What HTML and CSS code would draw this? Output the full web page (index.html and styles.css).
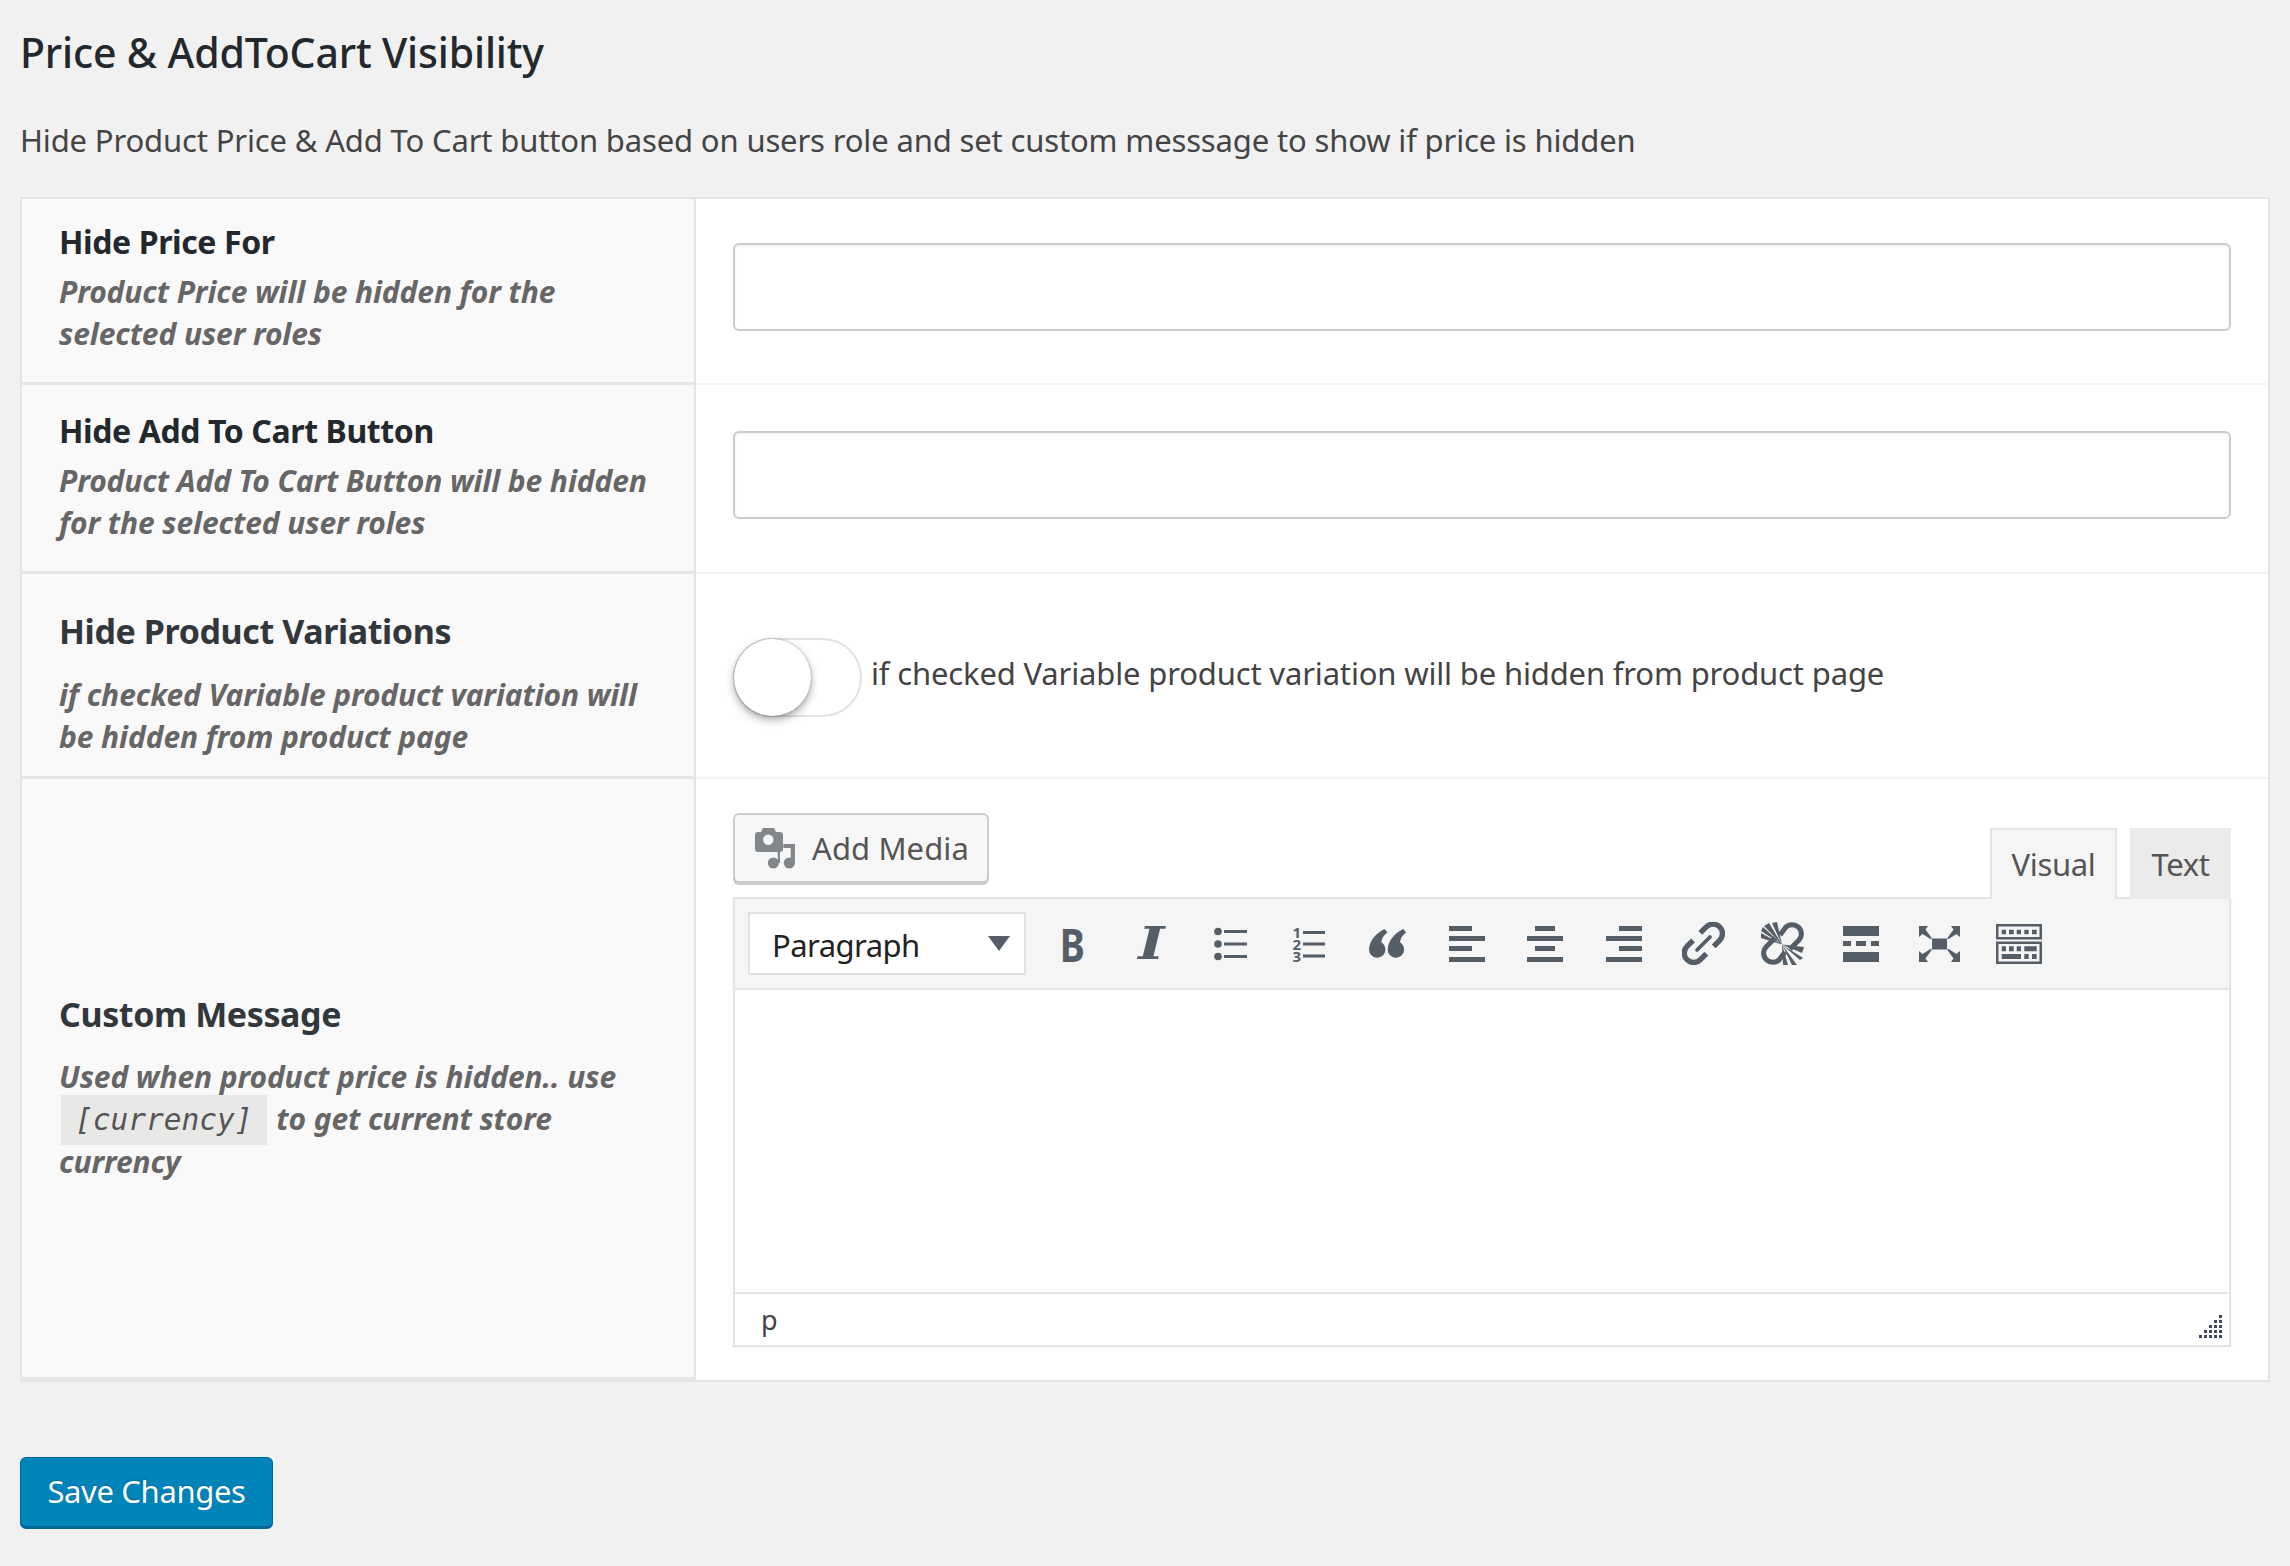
FILE: index.html
```html
<!DOCTYPE html>
<html lang="en">
<head>
<meta charset="utf-8">
<title>Price &amp; AddToCart Visibility</title>
<link rel="stylesheet" href="styles.css">
</head>
<body>
<h2 class="title">Price &amp; AddToCart Visibility</h2>
<p class="intro">Hide Product Price &amp; Add To Cart button based on users role and set custom messsage to show if price is hidden</p>
<div class="form-table">
  <div class="row row-a">
    <div class="label"><h3>Hide Price For</h3><p>Product Price will be hidden for the selected user roles</p></div>
    <div class="value"><div class="select-box"></div></div>
  </div>
  <div class="row row-a2">
    <div class="label"><h3>Hide Add To Cart Button</h3><p>Product Add To Cart Button will be hidden for the selected user roles</p></div>
    <div class="value"><div class="select-box"></div></div>
  </div>
  <div class="row row-b">
    <div class="label"><h3 class="spaced">Hide Product Variations</h3><p>if checked Variable product variation will be hidden from product page</p></div>
    <div class="value toggle-cell"><span class="toggle"><span class="knob"></span></span><span class="toggle-text">if checked Variable product variation will be hidden from product page</span></div>
  </div>
  <div class="row row-c">
    <div class="label center"><h3 class="spaced">Custom Message</h3><p>Used when product price is hidden.. use <code>[currency]</code> to get current store currency</p></div>
    <div class="value editor-cell">
      <div class="editor-tools">
        <button class="media-btn" type="button">
          <svg class="media-icon" viewBox="0 0 42 41"><path fill-rule="evenodd" d="M9 0h9a2 2 0 0 1 2 2l1 2h4a3 3 0 0 1 3 3v14a3 3 0 0 1-3 3H3a3 3 0 0 1-3-3V7a3 3 0 0 1 3-3h3l1-2a2 2 0 0 1 2-2zM13.300 6.500a5.200 5.200 0 1 0 0 10.400a5.200 5.200 0 0 0 0-10.400z"/><circle cx="18.300" cy="35" r="5.500"/><circle cx="34.300" cy="35" r="5.500"/><path d="M22.700 24H25v11h-2.300zM28.300 16H40v19h-4.300V20h-7.400z"/></svg>
          <span>Add Media</span>
        </button>
        <div class="tabs"><span class="tab active">Visual</span><span class="tab">Text</span></div>
      </div>
      <div class="editor">
        <div class="toolbar">
          <div class="format-select"><span>Paragraph</span><i class="caret"></i></div>
          <span class="tool"><b class="glyph-b">B</b></span>
          <span class="tool"><b class="glyph-i">I</b></span>
          <span class="tool"><svg viewBox="0 0 33 34" class="ico list"><circle cx="4" cy="4.500" r="3.800"/><circle cx="4" cy="17" r="3.800"/><circle cx="4" cy="29.500" r="3.800"/><path d="M10 3h23v3H10zM10 15.500h23v3H10zM10 28h23v3H10z"/></svg></span>
          <span class="tool"><span class="ol"><span class="ol-nums"><span>1</span><span>2</span><span>3</span></span><svg viewBox="0 0 23 34" class="ol-lines"><path d="M0 3.500h23v3H0zM0 15.500h23v3H0zM0 28h23v3H0z"/></svg></span></span>
          <span class="tool"><svg viewBox="0 0 38 30" class="ico quote"><path d="M15.500 0L18.500 3.500C14 7 12.500 10 12.500 13.500A8.200 8.200 0 1 1 0 21C0 12 7 4 15.500 0Z"/><path d="M34.200 0L37.200 3.500C32.700 7 31.200 10 31.200 13.500A8.200 8.200 0 1 1 18.700 21C18.700 12 25.700 4 34.200 0Z"/></svg></span>
          <span class="tool"><svg viewBox="0 0 36 36" class="ico"><path d="M0 0h23v5H0zM0 10h36v5H0zM0 20h23v5H0zM0 31h36v5H0z"/></svg></span>
          <span class="tool"><svg viewBox="0 0 36 36" class="ico"><path d="M8 0h20v5H8zM0 10h36v5H0zM8 20h20v5H8zM0 31h36v5H0z"/></svg></span>
          <span class="tool"><svg viewBox="0 0 36 36" class="ico"><path d="M13 0h23v5H13zM0 10h36v5H0zM13 20h23v5H13zM0 31h36v5H0z"/></svg></span>
          <span class="tool"><svg viewBox="0 0 43 43" class="ico link"><g fill="none" stroke="#555d66" stroke-width="5.400" stroke-linecap="butt"><path d="M18.300 10.900L24.300 4.900A9.200 9.200 0 0 1 37.700 18.300L31.700 24.300"/><path d="M24.400 31.700L18.400 37.700A9.200 9.200 0 0 1 5 24.300L11 18.300"/><path d="M15 28L28 15" stroke-width="3.800" stroke-linecap="round"/></g></svg></span>
          <span class="tool"><svg viewBox="0 0 43 43" class="ico link"><g fill="none" stroke="#555d66" stroke-width="5"><path d="M19 13L24.500 5.500A9.200 9.200 0 0 1 38 18L29 27"/><path d="M24 30L18.500 37.500A9.200 9.200 0 0 1 5 25L14 16"/></g><path d="M21 22.500L11 1 16 0ZM21 22.500L3 4 8 1ZM21 22.500L0 9 2 5ZM21 22.500L0 16 0 11ZM21 22.500L43 25 41 31ZM21 22.500L42 36 39 38ZM21 22.500L36 43 31 43ZM21 22.500L27 43 22 43Z"/></svg></span>
          <span class="tool"><svg viewBox="0 0 36 36" class="ico"><path d="M0 0h36v10H0zM0 26h36v10H0zM0 15h8v5H0zM13 15h10v5H13zM28 15h8v5h-8z"/></svg></span>
          <span class="tool"><svg viewBox="0 0 41 36" class="ico full"><path d="M13 12.500h15v11H13zM0 0h9L6.500 3.500 13 12.500 11.500 13 3.500 8 0 11zM41 0H32l2.500 3.500L28 12.500 29.500 13l8-5L41 11zM0 36h9L6.500 32.500 13 23.500 11.500 23l-8 5L0 25zM41 36H32l2.500-3.500L28 23.500 29.500 23l8 5L41 25z"/></svg></span>
          <span class="tool"><svg viewBox="0 0 46 40" class="ico sink"><path fill-rule="evenodd" d="M0 0h46v15.500H0zM2.500 2.500v10.500h41V2.500zM0 17.500h46V40H0zM2.500 20v17.500h41V20z"/><path d="M5.700 5.700H10v4.500H5.700zM13 5.700h4.700v4.500H13zM20.700 5.700H25v4.500h-4.300zM28.300 5.700h4.400v4.500h-4.400zM36 5.700h4.700v4.500H36zM5.700 22.300H10v5H5.700zM13 22.300h4.700v5H13zM20.700 22.300H25v5h-4.300zM28.300 22.300h12.400v5H28.300zM5.700 30H25v5H5.700zM28.300 30h4.400v5h-4.400zM36 30h4.700v5H36z"/></svg></span>
        </div>
        <div class="editor-body"></div>
        <div class="statusbar"><span>p</span>
          <svg class="grip" viewBox="0 0 23 23"><path d="M20 0h3v3h-3zM15 5h3v3h-3zM20 5h3v3h-3zM10 10h3v3h-3zM15 10h3v3h-3zM20 10h3v3h-3zM5 15h3v3H5zM10 15h3v3h-3zM15 15h3v3h-3zM20 15h3v3h-3zM0 20h3v3H0zM5 20h3v3H5zM10 20h3v3h-3zM15 20h3v3h-3zM20 20h3v3h-3z"/></svg>
        </div>
      </div>
    </div>
  </div>
</div>
<button class="save" type="button">Save Changes</button>
</body>
</html>
```

FILE: styles.css
```css
* { box-sizing: border-box; }
html, body { margin: 0; padding: 0; }
body {
  background: #f1f1f1;
  color: #444;
  font-family: "Noto Sans", "Open Sans", sans-serif;
  font-size: 32px;
  padding: 0 20px;
  height: 1566px;
  overflow: hidden;
}
.title {
  margin: 0;
  padding-top: 27px;
  font-size: 41px;
  line-height: 50px;
  font-weight: 500;
  color: #23282d;
  letter-spacing: -0.15px;
}
.intro {
  margin: 0;
  padding-top: 38px;
  line-height: 50px;
  height: 120px;
  font-size: 31px;
  letter-spacing: -0.15px;
  color: #444;
}
.form-table {
  background: #fff;
  border: 2px solid #e5e5e5;
  width: 2250px;
}
.row { display: grid; grid-template-columns: 674px 1fr; }
.row-a { height: 186px; }
.row-a2 { height: 189px; }
.row-b { height: 205px; }
.row-c { height: 601px; }
.label {
  background: #f9f9f9;
  border-right: 2px solid #e5e5e5;
  border-bottom: 3px solid #e5e5e5;
  padding: 22px 30px 0 37px;
}
.row-a2 .label { padding-top: 25px; }
.row-b .label { padding-top: 36px; }
.label h3 {
  margin: 0;
  font-size: 32px;
  line-height: 42px;
  font-weight: 700;
  color: #23282d;
  letter-spacing: -0.4px;
}
.label h3.spaced { margin-bottom: 13px; font-size: 34px; color: #32373c; }
.row-b .label h3.spaced { margin-bottom: 22px; }
.label p {
  margin: 8px 0 0;
  font-size: 30px;
  line-height: 42px;
  font-weight: 700;
  font-style: italic;
  color: #666;
  letter-spacing: -0.1px;
}
.label.center { display: flex; flex-direction: column; justify-content: center; padding-top: 44px; padding-bottom: 24px; }
code {
  font-family: "DejaVu Sans Mono", monospace;
  font-weight: 400;
  font-size: 29.5px;
  padding: 8px 14px;
  background: #e8e8e6;
  margin: 0 2px 0 2px;
  letter-spacing: 0;
  color: #555;
}
.value {
  border-bottom: 2px solid #f5f5f5;
  padding: 44px 37px 0 37px;
  display: flex;
  align-items: flex-start;
}
.row-a2 .value { padding-top: 46px; }
.row-c .value { border-bottom: 0; }
.select-box {
  width: 100%;
  height: 88px;
  background: #fff;
  border: 2px solid #ccc;
  border-radius: 6px;
  box-shadow: inset 0 1px 3px rgba(0,0,0,.07);
}
.toggle-cell { padding-top: 4px; align-items: center; }
.toggle {
  width: 129px;
  height: 79px;
  border: 2px solid #e2e2e2;
  border-radius: 40px;
  display: block;
  position: relative;
  flex: none;
}
.knob {
  position: absolute;
  left: -1px;
  top: -1px;
  width: 77px;
  height: 77px;
  border-radius: 50%;
  background: #fff;
  box-shadow: 0 4px 8px rgba(0,0,0,.35), 0 0 2px rgba(0,0,0,.35);
}
.toggle-text {
  margin-left: 9px;
  font-size: 31px;
  letter-spacing: -0.16px;
  position: relative;
  top: -5px;
}
.editor-cell { flex-direction: column; align-items: stretch; padding-top: 34px; padding-bottom: 0; justify-content: flex-start; }
.editor-tools { display: flex; justify-content: space-between; align-items: flex-end; height: 86px; position: relative; z-index: 1; margin-bottom: -2px; }
.media-btn {
  height: 70px;
  width: 256px;
  align-self: flex-start;
  display: flex;
  align-items: center;
  gap: 15px;
  padding: 0 0 0 20px;
  background: #f7f7f7;
  border: 2px solid #ccc;
  border-radius: 6px;
  box-shadow: 0 2px 0 #ccc;
  color: #555;
  font: inherit;
  font-size: 31px;
  letter-spacing: 0.1px;
}
.media-icon { width: 42px; height: 41px; fill: #82878c; flex: none; }
.tabs { display: flex; gap: 13px; }
.tab {
  height: 71px;
  border: 2px solid #e5e5e5;
  border-bottom: 0;
  background: #ebebeb;
  border-color: #ebebeb;
  color: #555;
  font-size: 31px;
  letter-spacing: -0.35px;
  line-height: 68px;
  width: 101px;
  text-align: center;
}
.tab.active { width: 127px; background: #f5f5f5; border-color: #e5e5e5; height: 71px; }
.editor { border: 2px solid #e5e5e5; box-shadow: 0 1px 3px rgba(0,0,0,.05); }
.toolbar {
  height: 91px;
  background: #f5f5f5;
  border-bottom: 2px solid #e5e5e5;
  display: flex;
  align-items: center;
  padding-left: 13px;
}
.format-select {
  width: 278px;
  height: 63px;
  background: #fff;
  border: 2px solid #e2e2e2;
  display: flex;
  align-items: center;
  justify-content: space-between;
  padding: 3px 14px 0 22px;
  color: #222;
  font-size: 31px;
  letter-spacing: -0.55px;
  margin-right: 7px;
}
.caret { width: 0; height: 0; border: 11px solid transparent; border-top: 15px solid #555d66; border-bottom: 0; margin-top: -3px; }
.tool { width: 78.85px; height: 60px; flex: none; display: flex; align-items: center; justify-content: center; color: #555d66; }
.ico { width: 36px; height: 36px; fill: #555d66; }
.ico.list { width: 33px; height: 34px; }
.ico.link { width: 43px; height: 43px; }
.ico.quote { width: 38px; height: 30px; }
.ico.full { width: 41px; height: 36px; }
.ico.sink { width: 46px; height: 40px; }
.ol { display: flex; align-items: center; gap: 3px; width: 33px; height: 36px; }
.ol-nums { display: flex; flex-direction: column; width: 8px; font: 700 15px/12px "Noto Sans", sans-serif; text-align: center; }
.ol-lines { width: 23px; height: 34px; fill: #555d66; }
.glyph-b { display: block; font: 700 46px/46px "Noto Sans", sans-serif; transform: scaleX(.82); }
.glyph-i { display: block; font: italic 700 45px/46px "DejaVu Serif", serif; transform: scaleX(1.25); }
.editor-body { height: 304px; background: #fff; border-bottom: 2px solid #e5e5e5; }
.statusbar { height: 51px; display: flex; align-items: center; justify-content: space-between; padding: 0 7px 0 26px; background: #fff; color: #444; font-size: 27px; }
.grip { width: 23px; height: 23px; fill: #3d4a5a; align-self: flex-end; margin-bottom: 7px; }
.save {
  display: block;
  margin-top: 75px;
  width: 253px;
  height: 72px;
  background: #0085ba;
  border: 1px solid #006799;
  border-width: 1px 1px 3px;
  border-radius: 6px;
  color: #fff;
  font: inherit;
  font-size: 31px;
  letter-spacing: -0.35px;
  text-shadow: 0 -1px 2px #006799;
  padding: 0 0 2px;
}
```
